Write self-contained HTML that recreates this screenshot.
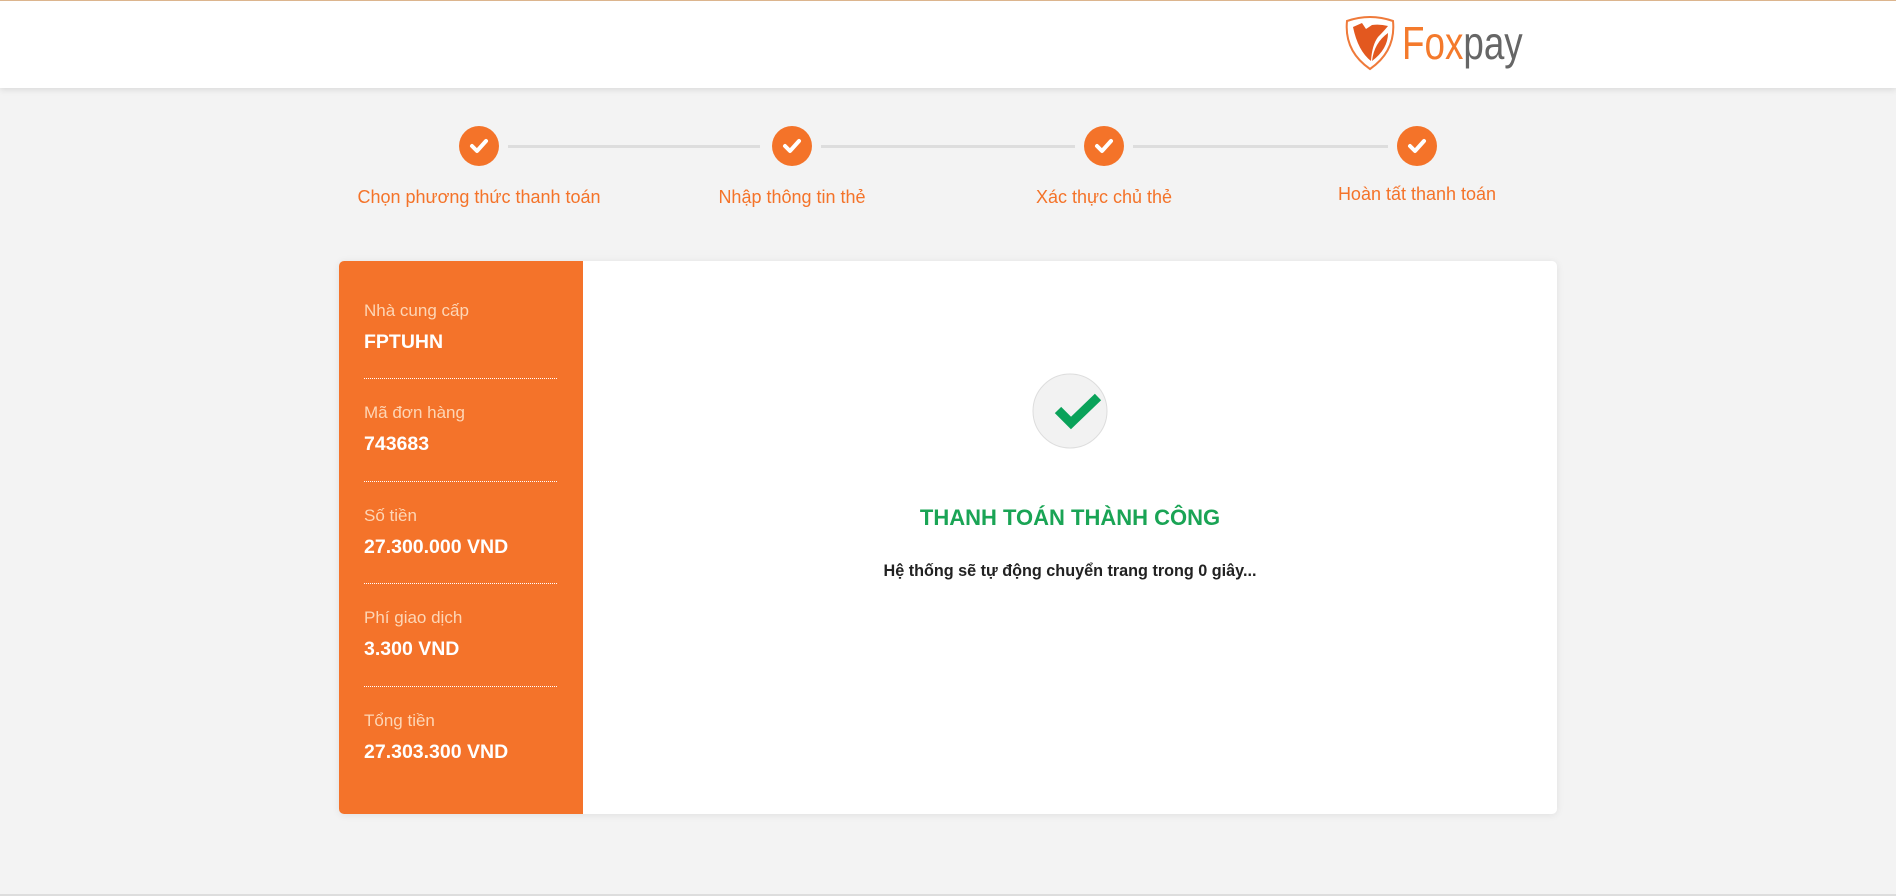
<!DOCTYPE html>
<html><head><meta charset="utf-8"><style>
*{margin:0;padding:0;box-sizing:border-box}
body{width:1896px;height:896px;background:#f3f3f3;font-family:"Liberation Sans",Roboto,sans-serif;position:relative;overflow:hidden}
.hdr{position:absolute;left:0;top:0;width:1896px;height:88px;background:#fff;border-top:1px solid #dcb58e;box-shadow:0 2px 6px rgba(0,0,0,.1)}
.logo{position:absolute;left:1344px;top:14px}
.lt{position:absolute;left:1402px;top:14px;font-size:46px;line-height:56px;transform:scaleX(0.8);transform-origin:left top}
.step{position:absolute;width:40px;height:40px;border-radius:50%;background:#f47329;top:126px}
.line{position:absolute;top:145px;height:3px;background:#ddd}
.lbl{position:absolute;font-size:18px;color:#f47329;transform:translateX(-50%);white-space:nowrap;top:187px}
.card{position:absolute;left:339px;top:261px;width:1218px;height:553px;background:#fff;border-radius:5px;box-shadow:0 1px 8px rgba(0,0,0,.08);overflow:hidden}
.side{position:absolute;left:0;top:0;width:244px;height:553px;background:#f4732a}
.it{position:absolute;left:25px;width:193px}
.k{font-size:17px;color:#fdd6b6;height:22px}
.v{font-size:19.5px;font-weight:bold;color:#fff;margin-top:8px}
.d{position:absolute;left:25px;width:193px;border-top:1px dotted #fff}
</style></head><body>
<div class="hdr">
<svg class="logo" width="52" height="56" viewBox="0 0 52 56">
<path d="M3 6 Q26 -2 49 6 Q52 36 26 54 Q0 36 3 6Z" fill="#fff" stroke="#ef7a3a" stroke-width="2"/>
<path d="M9 12 L18 8 L22 14 L28 10 Q36 9 44 11 Q40 16 34 22 Q28 30 27 46 Q14 36 9 12Z" fill="#e3581f"/>
<path d="M28 46 Q30 28 44 18 Q44 34 28 46Z" fill="#e3581f"/>
</svg>
<div class="lt"><span style="color:#f47a2c">Fox</span><span style="color:#666">pay</span></div>
</div>

<div class="line" style="left:508px;width:252px"></div>
<div class="line" style="left:821px;width:254px"></div>
<div class="line" style="left:1133px;width:255px"></div>
<div class="step" style="left:459px"><svg width="40" height="40"><path d="M13 20 L18 25 L27 15" stroke="#fff" stroke-width="4" fill="none" stroke-linecap="round" stroke-linejoin="round"/></svg></div>
<div class="step" style="left:772px"><svg width="40" height="40"><path d="M13 20 L18 25 L27 15" stroke="#fff" stroke-width="4" fill="none" stroke-linecap="round" stroke-linejoin="round"/></svg></div>
<div class="step" style="left:1084px"><svg width="40" height="40"><path d="M13 20 L18 25 L27 15" stroke="#fff" stroke-width="4" fill="none" stroke-linecap="round" stroke-linejoin="round"/></svg></div>
<div class="step" style="left:1397px"><svg width="40" height="40"><path d="M13 20 L18 25 L27 15" stroke="#fff" stroke-width="4" fill="none" stroke-linecap="round" stroke-linejoin="round"/></svg></div>
<div class="lbl" style="left:479px">Chọn phương thức thanh toán</div>
<div class="lbl" style="left:792px">Nhập thông tin thẻ</div>
<div class="lbl" style="left:1104px">Xác thực chủ thẻ</div>
<div class="lbl" style="left:1417px;top:184px">Hoàn tất thanh toán</div>

<div class="card">
<div class="side">
<div class="it" style="top:40px"><div class="k">Nhà cung cấp</div><div class="v">FPTUHN</div></div>
<div class="d" style="top:117px"></div>
<div class="it" style="top:142px"><div class="k">Mã đơn hàng</div><div class="v">743683</div></div>
<div class="d" style="top:220px"></div>
<div class="it" style="top:245px"><div class="k">Số tiền</div><div class="v">27.300.000 VND</div></div>
<div class="d" style="top:322px"></div>
<div class="it" style="top:347px"><div class="k">Phí giao dịch</div><div class="v">3.300 VND</div></div>
<div class="d" style="top:425px"></div>
<div class="it" style="top:450px"><div class="k">Tổng tiền</div><div class="v">27.303.300 VND</div></div>
</div>
<svg style="position:absolute;left:693px;top:112px" width="76" height="76"><circle cx="38" cy="38" r="37" fill="#f2f2f2" stroke="#ddd" stroke-width="1"/><path d="M26 37 L39 50 L66 24" stroke="#0aa25a" stroke-width="9" fill="none" stroke-linejoin="miter"/></svg>
<div style="position:absolute;left:244px;width:974px;top:244px;text-align:center;font-size:22px;font-weight:bold;color:#1aa455">THANH TOÁN THÀNH CÔNG</div>
<div style="position:absolute;left:244px;width:974px;top:301px;text-align:center;font-size:16.2px;font-weight:bold;color:#222">Hệ thống sẽ tự động chuyển trang trong 0 giây...</div>
</div>
<div style="position:absolute;left:0;top:894px;width:1896px;height:2px;background:#ddd"></div>
</body></html>
